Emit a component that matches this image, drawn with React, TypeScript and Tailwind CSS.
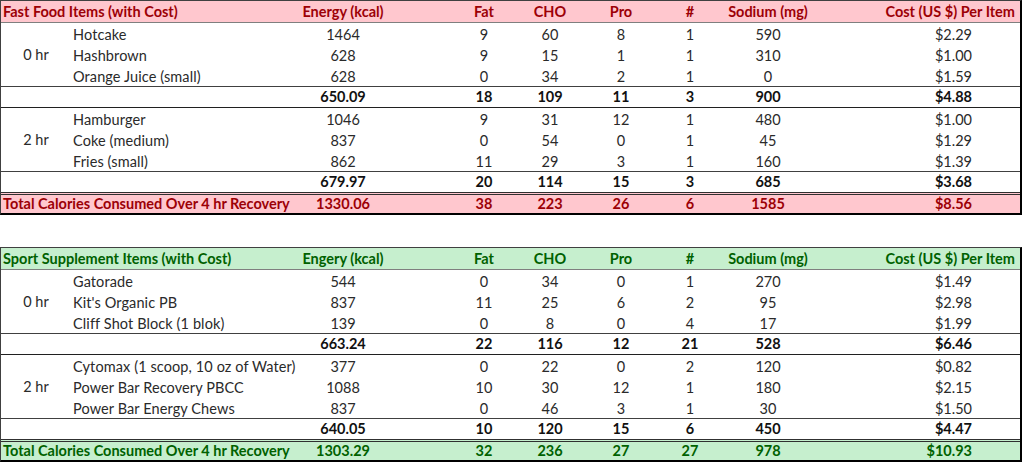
import React from "react";

type Item = { name: string; v: string[] };
type Group = { label: string; items: Item[]; sub: string[] };
type Table = {
  title: string;
  energy: string;
  theme: "red" | "green";
  groups: Group[];
  total: string[];
};

const tables: Table[] = [
  {
    title: "Fast Food Items (with Cost)",
    energy: "Energy (kcal)",
    theme: "red",
    groups: [
      {
        label: "0 hr",
        items: [
          { name: "Hotcake", v: ["1464", "9", "60", "8", "1", "590", "$2.29"] },
          { name: "Hashbrown", v: ["628", "9", "15", "1", "1", "310", "$1.00"] },
          { name: "Orange Juice (small)", v: ["628", "0", "34", "2", "1", "0", "$1.59"] },
        ],
        sub: ["650.09", "18", "109", "11", "3", "900", "$4.88"],
      },
      {
        label: "2 hr",
        items: [
          { name: "Hamburger", v: ["1046", "9", "31", "12", "1", "480", "$1.00"] },
          { name: "Coke (medium)", v: ["837", "0", "54", "0", "1", "45", "$1.29"] },
          { name: "Fries (small)", v: ["862", "11", "29", "3", "1", "160", "$1.39"] },
        ],
        sub: ["679.97", "20", "114", "15", "3", "685", "$3.68"],
      },
    ],
    total: ["1330.06", "38", "223", "26", "6", "1585", "$8.56"],
  },
  {
    title: "Sport Supplement Items (with Cost)",
    energy: "Engery (kcal)",
    theme: "green",
    groups: [
      {
        label: "0 hr",
        items: [
          { name: "Gatorade", v: ["544", "0", "34", "0", "1", "270", "$1.49"] },
          { name: "Kit's Organic PB", v: ["837", "11", "25", "6", "2", "95", "$2.98"] },
          { name: "Cliff Shot Block (1 blok)", v: ["139", "0", "8", "0", "4", "17", "$1.99"] },
        ],
        sub: ["663.24", "22", "116", "12", "21", "528", "$6.46"],
      },
      {
        label: "2 hr",
        items: [
          { name: "Cytomax (1 scoop, 10 oz of Water)", v: ["377", "0", "22", "0", "2", "120", "$0.82"] },
          { name: "Power Bar Recovery PBCC", v: ["1088", "10", "30", "12", "1", "180", "$2.15"] },
          { name: "Power Bar Energy Chews", v: ["837", "0", "46", "3", "1", "30", "$1.50"] },
        ],
        sub: ["640.05", "10", "120", "15", "6", "450", "$4.47"],
      },
    ],
    total: ["1303.29", "32", "236", "27", "27", "978", "$10.93"],
  },
];

const fullCols =
  "grid grid-cols-[300px_84px_66px_66px_66px_76px_62px_94px_1fr]";
const itemCols =
  "grid grid-cols-[230px_84px_66px_66px_66px_76px_62px_94px_1fr]";

function Nums({ v }: { v: string[] }) {
  return (
    <>
      <div className="flex items-center justify-center whitespace-nowrap">{v[0]}</div>
      <div />
      <div className="flex items-center justify-center">{v[1]}</div>
      <div className="flex items-center justify-center">{v[2]}</div>
      <div className="flex items-center justify-center">{v[3]}</div>
      <div className="flex items-center justify-center">{v[4]}</div>
      <div className="flex items-center justify-center">{v[5]}</div>
      <div className="flex items-center justify-end pr-[48px]">{v[6]}</div>
    </>
  );
}

function TableBlock({ t }: { t: Table }) {
  const red = t.theme === "red";
  const bg = red ? "bg-[#ffc7ce]" : "bg-[#c6efce]";
  const fg = red ? "text-[#9c0006]" : "text-[#006100]";
  return (
    <div className="w-[1022px] border-l border-l-[#404040] border-r-2 border-r-black border-t border-t-[#404040] border-b-2 border-b-black">
      {/* header */}
      <div className={`${fullCols} h-[22px] pt-[2px] ${bg} ${fg} font-bold border-b border-b-[#7f7f7f]`}>
        <div className="flex items-center pl-[2px] whitespace-nowrap">{t.title}</div>
        <div className="flex items-center justify-center whitespace-nowrap">{t.energy}</div>
        <div />
        <div className="flex items-center justify-center">Fat</div>
        <div className="flex items-center justify-center">CHO</div>
        <div className="flex items-center justify-center">Pro</div>
        <div className="flex items-center justify-center">#</div>
        <div className="flex items-center justify-center whitespace-nowrap">Sodium (mg)</div>
        <div className="flex items-center justify-end pr-[5px] whitespace-nowrap">Cost (US $) Per Item</div>
      </div>
      {t.groups.map((g, gi) => (
        <React.Fragment key={gi}>
          <div className="flex border-b border-b-[#404040] text-[#2a2a2a]">
            <div className="w-[70px] flex items-center justify-center pt-[2px]">{g.label}</div>
            <div className="flex-1 flex flex-col">
              {g.items.map((it, ii) => (
                <div key={ii} className={`${itemCols} h-[21px] pt-[3px]`}>
                  <div className="flex items-center pl-[2px] whitespace-nowrap tracking-[0.1px]">{it.name}</div>
                  <Nums v={it.v} />
                </div>
              ))}
            </div>
          </div>
          <div
            className={`${fullCols} font-bold text-[#111111] ${
              gi === t.groups.length - 1 ? "h-[20px]" : "h-[21px] pt-[1px] border-b border-b-[#202020]"
            }`}
          >
            <div />
            <Nums v={g.sub} />
          </div>
        </React.Fragment>
      ))}
      <div className={`${fullCols} h-[21px] ${bg} ${fg} font-bold border-t-[3px] border-double border-t-[#303030]`}>
        <div className="flex items-center pl-[2px] whitespace-nowrap">
          Total Calories Consumed Over 4 hr Recovery
        </div>
        <Nums v={t.total} />
      </div>
    </div>
  );
}

export default function App() {
  return (
    <div className="w-[1024px] h-[463px] bg-white overflow-hidden font-['Lato','Liberation_Sans',sans-serif] text-[14.5px] leading-none">
      <TableBlock t={tables[0]} />
      <div className="h-[32px]" />
      <TableBlock t={tables[1]} />
    </div>
  );
}
